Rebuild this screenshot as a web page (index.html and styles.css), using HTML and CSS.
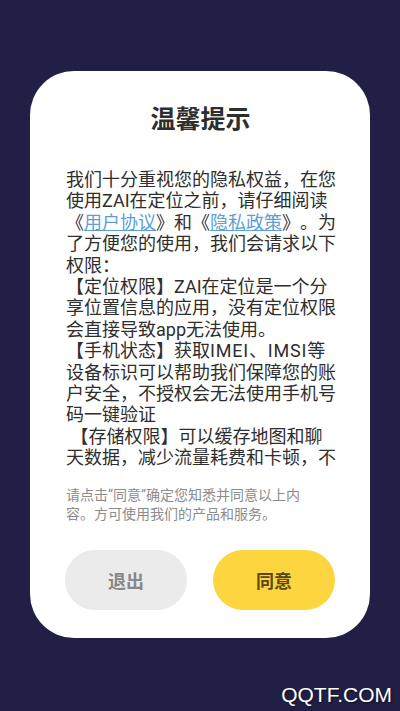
FILE: index.html
```html
<!DOCTYPE html>
<html lang="zh-CN">
<head>
  <meta charset="UTF-8" />
  <meta name="viewport" content="width=device-width, initial-scale=1.0" />
  <title>温馨提示</title>
  <link rel="stylesheet" href="styles.css">
</head>
<body>
  <div class="dialog">
    <h2 class="dialog-title">温馨提示</h2>

    <div class="dialog-body">
      我们十分重视您的隐私权益，在您使用ZAI在定位之前，请仔细阅读《<a href="#">用户协议</a>》和《<a href="#">隐私政策</a>》。为了方便您的使用，我们会请求以下权限：<br>
      【定位权限】ZAI在定位是一个分享位置信息的应用，没有定位权限会直接导致app无法使用。<br>
      【手机状态】获取<span class="term">IMEI、IMSI</span>等设备标识可以帮助我们保障您的账户安全，不授权会无法使用手机号码一键验证<br>
      &nbsp;【存储权限】可以缓存地图和聊天数据，减少流量耗费和卡顿，不授权会导致部分功能无法正常使用。
    </div>

    <p class="dialog-note">请点击“同意”确定您知悉并同意以上内容。方可使用我们的产品和服务。</p>

    <div class="dialog-actions">
      <button class="btn btn-exit">退出</button>
      <button class="btn btn-agree">同意</button>
    </div>
  </div>

  <div class="watermark">QQTF.COM</div>
</body>
</html>
```

FILE: styles.css
```css
:root {
  --bg-color: #221f46;
  --card-bg: #ffffff;
  --text-color: #2e2e2e;
  --muted: #8c8c8c;
  --link: #5b9fd8;
  --accent: #fdd53e;
}

body {
  font-family: Roboto, "Noto Sans CJK SC", sans-serif;
  background: var(--bg-color);
  color: var(--text-color);
  margin: 0;
  padding: 71px 30px 0;
  height: 711px;
  box-sizing: border-box;
  position: relative;
  overflow: hidden;
  text-spacing-trim: space-all;
}

.dialog {
  background: var(--card-bg);
  border-radius: 44px;
  padding: 34px 35px 28px 36px;
}

.dialog-title {
  margin: 0;
  font-size: 25px;
  line-height: 29px;
  font-weight: bold;
  text-align: center;
  color: var(--text-color);
}

.dialog-body {
  margin-top: 35px;
  width: 270px;
  height: 299px;
  overflow: hidden;
  font-size: 18px;
  line-height: 21.4px;
}

.dialog-body a {
  color: var(--link);
  text-decoration: underline;
}

.dialog-body .term {
  letter-spacing: 0.8px;
}

.dialog-note {
  width: 256px;
  margin: 18px 0 0;
  font-size: 14px;
  line-height: 18.5px;
  color: var(--muted);
}

.dialog-actions {
  display: flex;
  justify-content: space-between;
  margin-top: 27px;
  margin-left: -1px;
}

.btn {
  width: 122px;
  height: 60px;
  border: none;
  border-radius: 30px;
  font-family: inherit;
  font-size: 18px;
  font-weight: bold;
  cursor: pointer;
}

.btn-exit {
  background: #ebebeb;
  color: #888888;
}

.btn-agree {
  background: var(--accent);
  color: #5a4713;
}

.watermark {
  position: absolute;
  right: 8px;
  bottom: 4px;
  font-family: "Liberation Sans", Arial, sans-serif;
  font-size: 21px;
  color: #ffffff;
  text-shadow: 1px 1px 2px rgba(0,0,0,0.6);
}
```
